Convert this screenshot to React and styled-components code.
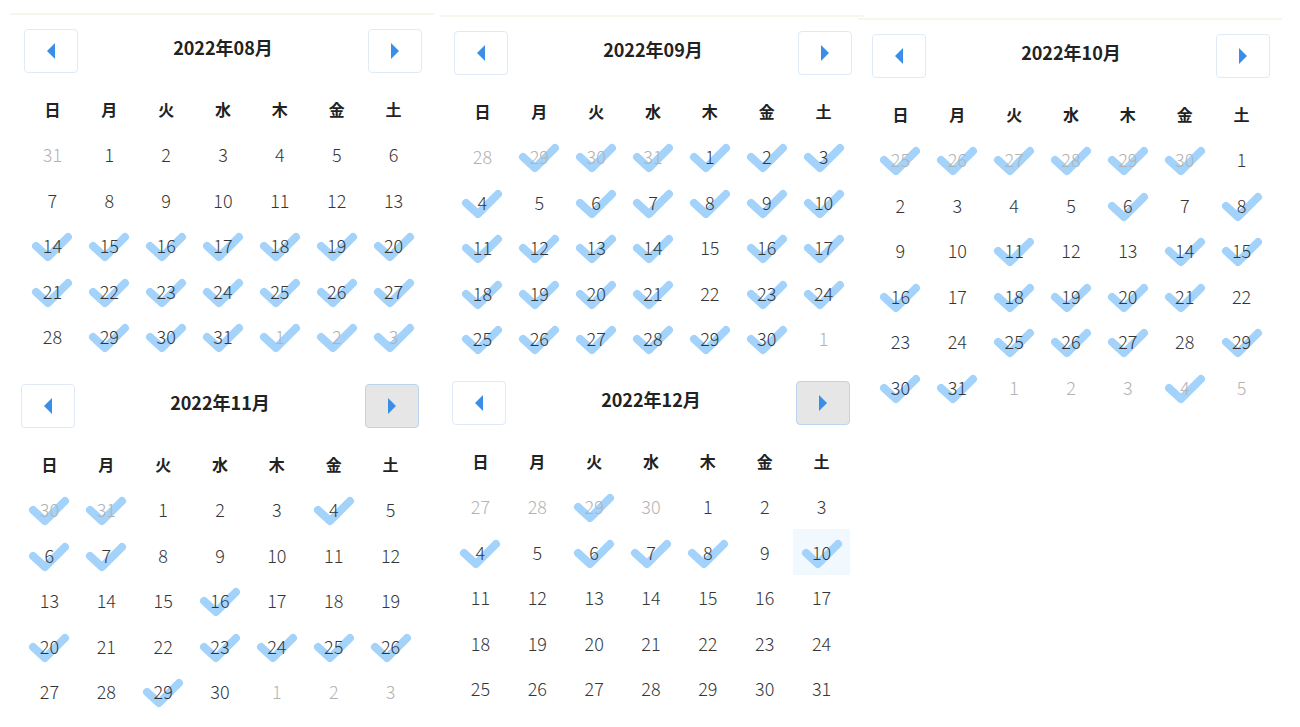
import * as React from "react";
import styled, { createGlobalStyle } from "styled-components";

const GlobalStyle = createGlobalStyle`
  body {
    margin: 0;
    background: #fff;
    font-family: "Noto Sans CJK JP", "Noto Sans", sans-serif;
  }
`;

const WEEKDAYS = ["日", "月", "火", "水", "木", "金", "土"];

const range = (a, b) => {
  const out = [];
  for (let i = a; i <= b; i++) out.push(i);
  return out;
};

const MONTHS = {
  aug: {
    title: "2022年08月", first: 1, days: 31, prevDays: 31, rows: 5,
    prev: [], cur: [...range(14, 27), 29, 30, 31], next: [1, 2, 3],
  },
  sep: {
    title: "2022年09月", first: 4, days: 30, prevDays: 31, rows: 5,
    prev: [29, 30, 31],
    cur: [...range(1, 4), ...range(6, 14), 16, 17, 18, 19, 20, 21, 23, 24, ...range(25, 30)],
    next: [],
  },
  oct: {
    title: "2022年10月", first: 6, days: 31, prevDays: 30, rows: 6,
    prev: range(25, 30),
    cur: [6, 8, 11, 14, 15, 16, 18, 19, 20, 21, 25, 26, 27, 29, 30, 31],
    next: [4],
  },
  nov: {
    title: "2022年11月", first: 2, days: 30, prevDays: 31, rows: 5,
    prev: [30, 31], cur: [4, 6, 7, 16, 20, 23, 24, 25, 26, 29], next: [],
  },
  dec: {
    title: "2022年12月", first: 4, days: 31, prevDays: 30, rows: 5,
    prev: [29], cur: [4, 6, 7, 8, 10], next: [], today: 10,
  },
};

function buildCells(m) {
  const cells = [];
  for (let i = 0; i < m.first; i++) {
    const d = m.prevDays - m.first + 1 + i;
    cells.push({ day: d, muted: true, checked: m.prev.includes(d) });
  }
  for (let d = 1; d <= m.days; d++) {
    cells.push({ day: d, muted: false, checked: m.cur.includes(d), today: m.today === d });
  }
  let n = 1;
  while (cells.length < m.rows * 7) {
    cells.push({ day: n, muted: true, checked: m.next.includes(n) });
    n++;
  }
  return cells;
}

function Check() {
  return (
    <CheckSvg width="44" height="32" viewBox="0 0 44 32">
      <polyline
        points="6,15 18,26 38,6"
        fill="none"
        stroke="#a3d2fb"
        strokeWidth="8"
        strokeLinecap="round"
        strokeLinejoin="round"
      />
    </CheckSvg>
  );
}

function Arrow({ dir }) {
  return (
    <svg width="9" height="16" viewBox="0 0 9 16">
      {dir === "left" ? (
        <polygon points="8,0 8,16 0,8" fill="#3b8ee8" />
      ) : (
        <polygon points="1,0 1,16 9,8" fill="#3b8ee8" />
      )}
    </svg>
  );
}

function Calendar({ month, nextActive, mt, ml, topLine }) {
  const m = MONTHS[month];
  const cells = buildCells(m);
  return (
    <Card $mt={mt} $ml={ml} $topLine={topLine}>
      <Header>
        <NavButton aria-label="prev">
          <Arrow dir="left" />
        </NavButton>
        <Title>{m.title}</Title>
        <NavButton $active={nextActive} aria-label="next">
          <Arrow dir="right" />
        </NavButton>
      </Header>
      <Grid>
        {WEEKDAYS.map((w) => (
          <Weekday key={w}>{w}</Weekday>
        ))}
        {cells.map((c, i) => (
          <DayCell key={i} $today={c.today}>
            {c.checked && <Check />}
            <DayNum $muted={c.muted}>{c.day}</DayNum>
          </DayCell>
        ))}
      </Grid>
    </Card>
  );
}

export default function App() {
  return (
    <Page>
      <GlobalStyle />
      <Column $w={436}>
        <Calendar month="aug" mt={13} ml={10} topLine />
        <Calendar month="nov" mt={9} ml={7} nextActive />
      </Column>
      <Column $w={422}>
        <Calendar month="sep" mt={15} ml={4} topLine />
        <Calendar month="dec" mt={4} ml={2} nextActive />
      </Column>
      <Column $w={440}>
        <Calendar month="oct" mt={18} ml={0} topLine />
      </Column>
    </Page>
  );
}

const Page = styled.div`
  display: flex;
  width: 1300px;
  height: 727px;
  overflow: hidden;
  background: #fff;
`;

const Column = styled.div`
  display: flex;
  flex-direction: column;
  width: ${(p) => p.$w}px;
  flex-shrink: 0;
`;

const Card = styled.div`
  width: 398px;
  flex-shrink: 0;
  margin-top: ${(p) => p.$mt}px;
  margin-left: ${(p) => p.$ml}px;
  padding: 14px 12px 0 14px;
  border-top: 2px solid ${(p) => (p.$topLine ? "#f6f5ee" : "transparent")};
  background: #fff;
`;

const Header = styled.div`
  display: flex;
  align-items: center;
  justify-content: space-between;
  height: 44px;
`;

const NavButton = styled.div`
  width: 52px;
  height: 42px;
  display: flex;
  align-items: center;
  justify-content: center;
  border: 1px solid ${(p) => (p.$active ? "#bcd5ef" : "#dfeaf7")};
  border-radius: 4px;
  background: ${(p) => (p.$active ? "#e6e6e6" : "#fff")};
`;

const Title = styled.div`
  font-size: 18px;
  font-weight: 700;
  color: #222;
  margin-top: -8px;
`;

const Grid = styled.div`
  display: grid;
  grid-template-columns: repeat(7, 1fr);
  grid-auto-rows: 45.5px;
  margin-top: 13px;
`;

const Weekday = styled.div`
  display: flex;
  align-items: center;
  justify-content: center;
  font-size: 16px;
  font-weight: 700;
  color: #222;
`;

const DayCell = styled.div`
  position: relative;
  display: flex;
  align-items: center;
  justify-content: center;
  background: ${(p) => (p.$today ? "#f1f8fe" : "transparent")};
`;

const CheckSvg = styled.svg`
  position: absolute;
  left: 50%;
  top: 50%;
  margin-left: -22px;
  margin-top: -14px;
`;

const DayNum = styled.span`
  position: relative;
  font-size: 18px;
  font-weight: 300;
  color: ${(p) => (p.$muted ? "#b3b3b3" : "#363636")};
`;
